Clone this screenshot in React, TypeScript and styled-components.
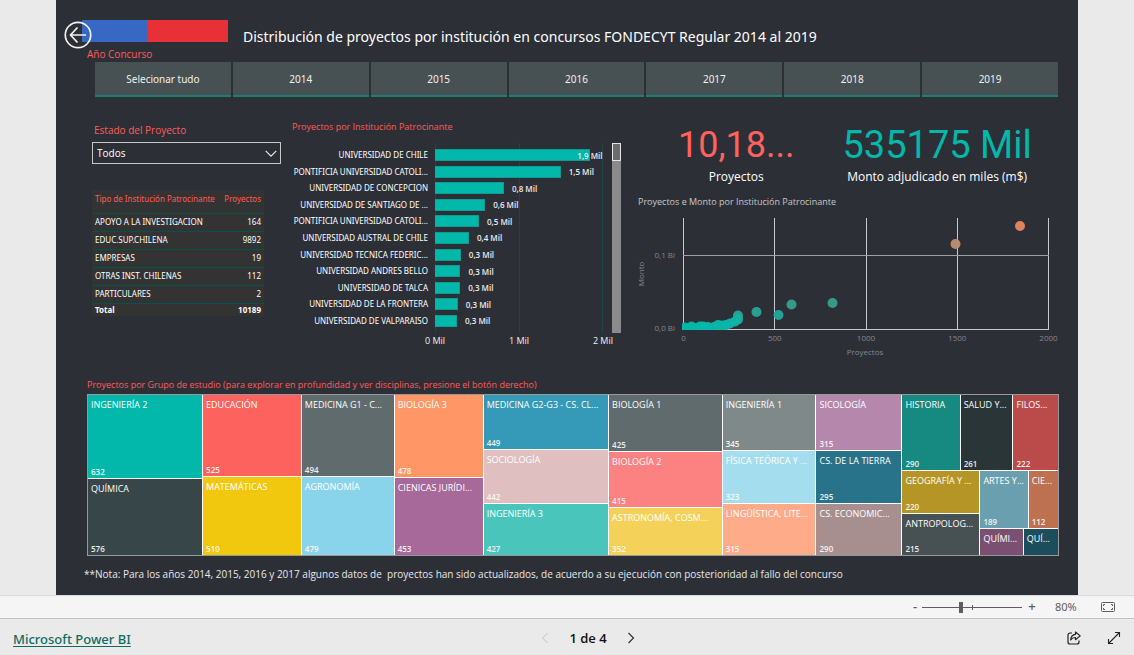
import React, { useState } from "react";
import styled, { createGlobalStyle } from "styled-components";

const GlobalStyle = createGlobalStyle`
  * { box-sizing: border-box; }
  body {
    margin: 0;
    font-family: "Open Sans", "Noto Sans", sans-serif;
    background: #eaeaea;
  }
  button, select, input { font-family: inherit; }
`;

const Page = styled.div`
  display: flex;
  flex-direction: column;
  min-height: 100vh;
`;

const Stage = styled.main`
  flex: 1;
  display: flex;
  padding: 0 56px;
  background: #eaeaea;
`;

const Report = styled.article`
  flex: 1;
  min-width: 0;
  padding: 20px 19px 0 26px;
  background: #2d2f37;
  color: #fff;
`;

const Header = styled.header`
  position: relative;
  display: flex;
  align-items: flex-start;
  height: 27px;
`;

const Flag = styled.div`
  width: 146px;
  height: 22px;
  flex: none;
  background: linear-gradient(to right, #3668c4 0 65px, #e83137 65px);
`;

const BackButton = styled.button`
  position: absolute;
  left: -18px;
  top: 1px;
  width: 28px;
  height: 28px;
  padding: 0;
  border: 0;
  background: none;
  svg { display: block; }
`;

const Title = styled.h1`
  margin: 5px 0 0 15px;
  font-family: "Noto Sans", sans-serif;
  font-size: 14px;
  line-height: 24px;
  font-weight: 400;
  white-space: nowrap;
`;

const Caption = styled.h2<{ $size?: number; $tone?: string }>`
  margin: 0;
  font-size: ${(p) => p.$size ?? 9}px;
  line-height: 14px;
  font-weight: 400;
  color: ${(p) => p.$tone ?? "#fd5c58"};
  white-space: nowrap;
`;

const YearSlicer = styled.section`
  padding-left: 5px;
`;

const YearRow = styled.div`
  display: flex;
  gap: 2px;
  margin: 0 1px 0 8px;
`;

const YearButton = styled.button`
  flex: 1 1 0;
  height: 35px;
  margin-top: 1px;
  padding: 0;
  border: 0;
  border-bottom: 2px solid #1c7d75;
  background: #475052;
  color: #f0f0f0;
  font-family: "Noto Sans", sans-serif;
  font-size: 10px;
`;

const Middle = styled.div`
  display: grid;
  grid-template-columns: 189fr 329fr 426fr;
  column-gap: 11px;
  margin: 21px 1px 0 10px;
  height: 260px;
`;

const Filters = styled.div`
  padding-top: 5px;
`;

const SelectLabel = styled.label`
  display: block;
  margin-left: 2px;
  font-size: 10px;
  line-height: 14px;
  color: #fd5c58;
`;

const SelectBox = styled.div`
  position: relative;
  margin-top: 5px;
  svg {
    position: absolute;
    right: 4px;
    top: 8px;
    pointer-events: none;
  }
`;

const Select = styled.select`
  display: block;
  appearance: none;
  width: 100%;
  height: 22px;
  padding: 0 4px;
  border: 1px solid #c8c8c8;
  border-radius: 0;
  background: #2d2f37;
  color: #fff;
  font-size: 10px;
`;

const Table = styled.table`
  width: 172px;
  height: 126px;
  margin-top: 26px;
  border-collapse: collapse;
  background: #333333;
  font-family: "Noto Sans", sans-serif;
  font-size: 8px;
  line-height: 12px;
  white-space: nowrap;
  th, td {
    padding: 0 3px;
    text-align: left;
    border-bottom: 1px solid #05524c;
  }
  th:last-child, td:last-child { text-align: right; }
  thead th {
    height: 23px;
    padding-bottom: 4px;
    font-weight: 400;
    color: #fd5c58;
  }
  tfoot th, tfoot td { font-weight: 700; border-bottom: 0; }
`;

const BarVisual = styled.section`
  padding: 2px 0 0 0;
`;

const BarBody = styled.div`
  display: flex;
  margin-top: 9px;
  height: 190px;
`;

const Plot = styled.div`
  flex: 1;
  min-width: 0;
  display: grid;
  grid-template-rows: repeat(11, 1fr);
  padding: 4px 0;
  background: linear-gradient(#1c4547, #1c4547) 143px 0 / 1px 100% no-repeat,
    linear-gradient(#1c4547, #1c4547) calc(143px + (100% - 152px) / 2) 0 / 1px 100% no-repeat,
    linear-gradient(#1c4547, #1c4547) calc(100% - 9px) 0 / 1px 100% no-repeat;
`;

const BarRow = styled.div`
  display: flex;
  align-items: center;
  min-height: 0;
  padding-right: 9px;
`;

const BarName = styled.span`
  flex: none;
  width: 136px;
  margin-right: 7px;
  text-align: right;
  font-family: "Noto Sans", sans-serif;
  font-size: 8px;
  line-height: 12px;
  color: #fff;
  white-space: nowrap;
`;

const BarTrack = styled.div`
  flex: 1;
  display: flex;
  align-items: center;
`;

const Bar = styled.div`
  flex: none;
  height: 12px;
  background: #01b8aa;
  border: 1px solid #0b9c92;
  border-left: 0;
`;

const BarValue = styled.span<{ $inside: boolean }>`
  margin-left: ${(p) => (p.$inside ? -13 : 8)}px;
  padding-top: 1px;
  font-size: 8px;
  line-height: 12px;
  font-weight: 600;
  color: #ececec;
  white-space: nowrap;
`;

const ScrollTrack = styled.div`
  width: 9px;
  background: #8b8b8d;
`;

const ScrollThumb = styled.div`
  height: 18px;
  border: 1px solid #e6e6e6;
  background: #6b6c70;
`;

const Axis = styled.div`
  display: flex;
  justify-content: space-between;
  margin: 1px 8px 0 133px;
  font-size: 9px;
  line-height: 14px;
  color: #f0f0f0;
`;

const RightColumn = styled.div`
  padding-left: 6px;
`;

const Kpis = styled.div`
  display: flex;
  margin-left: 40px;
  height: 77px;
  gap: 48px;
`;

const Kpi = styled.div<{ $tone: string; $size: number }>`
  display: flex;
  flex-direction: column;
  align-items: center;
  white-space: nowrap;
  strong {
    font-family: Roboto, sans-serif;
    font-weight: 400;
    font-size: ${(p) => p.$size}px;
    line-height: 44px;
    margin-top: 5px;
    color: ${(p) => p.$tone};
  }
  span {
    font-size: 12px;
    line-height: 16px;
    margin-top: 2px;
    font-weight: 500;
  }
`;

const Scatter = styled.svg`
  display: block;
  width: 100%;
  height: auto;
  overflow: visible;
  font-size: 8px;
  fill: #85868a;
`;

const TreeSection = styled.section`
  margin: 0 0 0 5px;
`;

const TreeFrame = styled.div`
  display: flex;
  gap: 1px;
  height: 162px;
  margin-top: 2px;
  border: 1px solid #96989c;
  background: #fff;
`;

const Group = styled.div<{ $dir: "row" | "column"; $weight: number }>`
  display: flex;
  flex-direction: ${(p) => p.$dir};
  gap: 1px;
  flex: ${(p) => p.$weight} 1 0;
  min-width: 0;
  min-height: 0;
`;

const Tile = styled.div<{ $weight: number; $color: string }>`
  flex: ${(p) => p.$weight} 1 0;
  min-width: 0;
  min-height: 0;
  display: flex;
  flex-direction: column;
  justify-content: space-between;
  padding: 3px 0 0 3px;
  overflow: hidden;
  background: ${(p) => p.$color};
  white-space: nowrap;
  span { font-size: 9px; line-height: 14px; }
  small { font-size: 8px; line-height: 13px; font-weight: 600; opacity: 0.9; }
`;

const Note = styled.p`
  margin: 10px 0 0 2px;
  font-size: 10px;
  line-height: 16px;
  color: #e8e8e8;
  white-space: pre;
`;

const ZoomBar = styled.div`
  display: flex;
  align-items: center;
  justify-content: flex-end;
  height: 24px;
  padding-right: 19px;
  border-top: 1px solid #dcdcdc;
  border-bottom: 1px solid #c4c4c4;
  background: #f5f5f5;
  color: #605e5c;
`;

const ZoomStep = styled.button`
  width: 10px;
  padding: 0 0 2px;
  border: 0;
  background: none;
  color: #605e5c;
  font-size: 13px;
  line-height: 18px;
  font-weight: 600;
`;

const ZoomRange = styled.input`
  appearance: none;
  width: 100px;
  height: 12px;
  margin: 0 5px 0 2px;
  background: linear-gradient(#605e5c, #605e5c) 50px 50% / 1px 5px no-repeat,
    linear-gradient(#605e5c, #605e5c) 0 50% / 100% 1px no-repeat;
  &::-webkit-slider-thumb {
    appearance: none;
    width: 4px;
    height: 11px;
    background: #605e5c;
  }
`;

const ZoomLevel = styled.output`
  width: 24px;
  margin: 0 22px 0 18px;
  padding-bottom: 2px;
  font-family: "Noto Sans", sans-serif;
  font-size: 11px;
`;

const IconButton = styled.button`
  display: flex;
  padding: 0;
  border: 0;
  background: none;
`;

const Footer = styled.footer`
  display: grid;
  grid-template-columns: 1fr auto 1fr;
  align-items: center;
  height: 36px;
  padding: 2px 13px 0;
  background: #eaeaea;
`;

const BrandLink = styled.a`
  color: #0f6a61;
  font-family: "Noto Sans", sans-serif;
  font-size: 13px;
  line-height: 20px;
  font-weight: 500;
  text-underline-offset: 2px;
`;

const Pager = styled.nav`
  display: flex;
  align-items: center;
  gap: 20px;
  padding-left: 42px;
  font-size: 13px;
  line-height: 18px;
  font-weight: 600;
  color: #111;
`;

const Actions = styled.div`
  display: flex;
  justify-content: flex-end;
  align-items: center;
  gap: 26px;
`;

const years = ["Selecionar tudo", "2014", "2015", "2016", "2017", "2018", "2019"];

const institutionTypes: [string, number][] = [
  ["APOYO A LA INVESTIGACION", 164],
  ["EDUC.SUP.CHILENA", 9892],
  ["EMPRESAS", 19],
  ["OTRAS INST. CHILENAS", 112],
  ["PARTICULARES", 2],
];

const institutions: [string, number, string][] = [
  ["UNIVERSIDAD DE CHILE", 1849, "1,9 Mil"],
  ["PONTIFICIA UNIVERSIDAD CATOLI...", 1496, "1,5 Mil"],
  ["UNIVERSIDAD DE CONCEPCION", 820, "0,8 Mil"],
  ["UNIVERSIDAD DE SANTIAGO DE ...", 597, "0,6 Mil"],
  ["PONTIFICIA UNIVERSIDAD CATOLI...", 524, "0,5 Mil"],
  ["UNIVERSIDAD AUSTRAL DE CHILE", 404, "0,4 Mil"],
  ["UNIVERSIDAD TECNICA FEDERIC...", 308, "0,3 Mil"],
  ["UNIVERSIDAD ANDRES BELLO", 303, "0,3 Mil"],
  ["UNIVERSIDAD DE TALCA", 300, "0,3 Mil"],
  ["UNIVERSIDAD DE LA FRONTERA", 272, "0,3 Mil"],
  ["UNIVERSIDAD DE VALPARAISO", 262, "0,3 Mil"],
];

type Point = [number, number, string];
const points: Point[] = [
  [382, 17, "#e8875f"], [317.5, 35, "#c08f6c"], [194.5, 94, "#37a08d"],
  [153.5, 95.5, "#35a08f"], [118.5, 103, "#2aa596"], [140.5, 106, "#21a99b"],
  [100, 106.5, "#27a898"], [100, 110.5, "#14b2a4"], [97, 112.5, "#12b3a5"],
  [92, 114.5, "#0fb4a6"], [88, 116, "#0cb5a7"], [84, 116.5, "#0ab6a8"],
  [80, 116, "#08b6a9"], [76, 118, "#06b7a9"], [70, 118, "#04b7aa"],
  [68, 119, "#04b7aa"], [65, 117.5, "#03b8aa"], [62, 117.5, "#03b8aa"],
  [57, 119, "#03b8aa"], [53, 119, "#02b8aa"], [53.5, 117.5, "#02b8aa"],
  [49, 120, "#01b8aa"], [47, 118.5, "#01b8aa"], [44, 120, "#01b8aa"],
];

type Node = { label?: string; value?: number; shown?: boolean; color?: string; dir?: "row" | "column"; kids?: Node[] };
const t = (label: string, value: number, color: string, shown = true): Node => ({ label, value, color, shown });
const g = (dir: "row" | "column", ...kids: Node[]): Node => ({ dir, kids });

const tree: Node[] = [
  g("column", t("INGENIERÍA 2", 632, "#01b8aa"), t("QUÍMICA", 576, "#374649")),
  g("column", t("EDUCACIÓN", 525, "#fd625e"), t("MATEMÁTICAS", 510, "#f2c80f")),
  g("column", t("MEDICINA G1 - C...", 494, "#5f6b6d"), t("AGRONOMÍA", 479, "#8ad4eb")),
  g("column", t("BIOLOGÍA 3", 478, "#fe9666"), t("CIENICAS JURÍDI...", 453, "#a66999")),
  g("column", t("MEDICINA G2-G3 - CS. CL...", 449, "#3599b8"), t("SOCIOLOGÍA", 442, "#dfbfbf"), t("INGENIERÍA 3", 427, "#4ac5bb")),
  g("column", t("BIOLOGÍA 1", 425, "#5f6b6d"), t("BIOLOGÍA 2", 415, "#fb8281"), t("ASTRONOMÍA, COSM...", 352, "#f4d25a")),
  g("column", t("INGENIERÍA 1", 345, "#7f898a"), t("FÍSICA TEÓRICA Y ...", 323, "#a4ddee"), t("LINGÜÍSTICA, LITE...", 315, "#fdab89")),
  g("column", t("SICOLOGÍA", 315, "#b687ac"), t("CS. DE LA TIERRA", 295, "#28738a"), t("CS. ECONOMIC...", 290, "#a78f8f")),
  g(
    "column",
    g("row", t("HISTORIA", 290, "#168980"), t("SALUD Y...", 261, "#293537"), t("FILOS...", 222, "#bb4a4a")),
    g(
      "row",
      g("column", t("GEOGRAFÍA Y ...", 220, "#b59525"), t("ANTROPOLOG...", 215, "#475052")),
      g(
        "column",
        g("row", t("ARTES Y...", 189, "#6a9fb0"), t("CIE...", 112, "#bd7150")),
        g("row", t("QUÍMI...", 77, "#7b4f71", false), t("QUÍ...", 61, "#1b4d5c", false)),
      ),
    ),
  ),
];

const weigh = (n: Node): number => (n.kids ? n.kids.reduce((s, k) => s + weigh(k), 0) : n.value ?? 0);

function TreeNode({ node }: { node: Node }) {
  if (node.kids) {
    return (
      <Group $dir={node.dir ?? "column"} $weight={weigh(node)}>
        {node.kids.map((k, i) => <TreeNode key={i} node={k} />)}
      </Group>
    );
  }
  return (
    <Tile $weight={node.value ?? 0} $color={node.color ?? "#000"}>
      <span>{node.label}</span>
      {node.shown && <small>{node.value}</small>}
    </Tile>
  );
}

function ScatterChart() {
  return (
    <Scatter viewBox="0 0 420 150" role="img" aria-label="Proyectos e Monto">
      <g stroke="#c9c9cb" strokeWidth="1">
        {[45.5, 136.5, 228.5, 319.5, 410.5].map((x) => <line key={x} x1={x} x2={x} y1="9" y2="120" />)}
        <line x1="45" x2="411" y1="46.5" y2="46.5" stroke="#a0a1a4" />
        <line x1="45" x2="411" y1="120.5" y2="120.5" />
      </g>
      <clipPath id="plot"><rect x="44" y="0" width="374" height="121" /></clipPath>
      <g clipPath="url(#plot)">
        {points.map(([x, y, c], i) => <circle key={i} cx={x} cy={y} r="5" fill={c} fillOpacity="0.95" />)}
      </g>
      <text x="37" y="49" textAnchor="end">0,1 Bi</text>
      <text x="37" y="122" textAnchor="end">0,0 Bi</text>
      {[0, 500, 1000, 1500, 2000].map((v, i) => (
        <text key={v} x={45.5 + i * 91.25} y="132" textAnchor="middle">{v}</text>
      ))}
      <text x="227" y="146" textAnchor="middle">Proyectos</text>
      <text transform="translate(6 65) rotate(-90)" textAnchor="middle">Monto</text>
    </Scatter>
  );
}

export default function App() {
  const [zoom, setZoom] = useState(39);
  return (
    <Page>
      <GlobalStyle />
      <Stage>
        <Report>
          <Header>
            <Flag />
            <BackButton aria-label="Volver">
              <svg width="28" height="28" viewBox="0 0 28 28" fill="none" stroke="#f2f2f2" strokeWidth="1.7">
                <circle cx="14" cy="14" r="12.7" />
                <path d="M22 14H7M13.5 6.5L6.5 14l7 7.5" />
              </svg>
            </BackButton>
            <Title>Distribución de proyectos por institución en concursos FONDECYT Regular 2014 al 2019</Title>
          </Header>
          <YearSlicer>
            <Caption $size={10}>Año Concurso</Caption>
            <YearRow>
              {years.map((y) => <YearButton key={y}>{y}</YearButton>)}
            </YearRow>
          </YearSlicer>

          <Middle>
            <Filters>
              <SelectLabel htmlFor="estado">Estado del Proyecto</SelectLabel>
              <SelectBox>
                <Select id="estado"><option>Todos</option></Select>
                <svg width="12" height="8" viewBox="0 0 12 8" fill="none" stroke="#e8e8e8" strokeWidth="1.2">
                  <path d="M0.7 0.8L6 6.2l5.3-5.4" />
                </svg>
              </SelectBox>
              <Table>
                <thead>
                  <tr><th>Tipo de Institución Patrocinante</th><th>Proyectos</th></tr>
                </thead>
                <tbody>
                  {institutionTypes.map(([name, n]) => <tr key={name}><td>{name}</td><td>{n}</td></tr>)}
                </tbody>
                <tfoot>
                  <tr><th>Total</th><td>10189</td></tr>
                </tfoot>
              </Table>
            </Filters>

            <BarVisual>
              <Caption>Proyectos por Institución Patrocinante</Caption>
              <BarBody>
                <Plot>
                  {institutions.map(([name, n, label], i) => (
                    <BarRow key={i}>
                      <BarName>{name}</BarName>
                      <BarTrack>
                        <Bar style={{ width: `${n / 20}%` }} />
                        <BarValue $inside={n > 1800}>{label}</BarValue>
                      </BarTrack>
                    </BarRow>
                  ))}
                </Plot>
                <ScrollTrack><ScrollThumb /></ScrollTrack>
              </BarBody>
              <Axis><span>0 Mil</span><span>1 Mil</span><span>2 Mil</span></Axis>
            </BarVisual>

            <RightColumn>
              <Kpis>
                <Kpi $tone="#fd625e" $size={36}><strong>10,18...</strong><span>Proyectos</span></Kpi>
                <Kpi $tone="#01b8aa" $size={38}><strong>535175 Mil</strong><span>Monto adjudicado en miles (m$)</span></Kpi>
              </Kpis>
              <Caption $tone="#c8c8c8">Proyectos e Monto por Institución Patrocinante</Caption>
              <ScatterChart />
            </RightColumn>
          </Middle>

          <TreeSection>
            <Caption>Proyectos por Grupo de estudio (para explorar en profundidad y ver disciplinas, presione el botón derecho)</Caption>
            <TreeFrame>
              {tree.map((n, i) => <TreeNode key={i} node={n} />)}
            </TreeFrame>
          </TreeSection>
          <Note>**Nota: Para los años 2014, 2015, 2016 y 2017 algunos datos de  proyectos han sido actualizados, de acuerdo a su ejecución con posterioridad al fallo del concurso</Note>
        </Report>
      </Stage>

      <ZoomBar>
        <ZoomStep aria-label="Alejar">-</ZoomStep>
        <ZoomRange type="range" aria-label="Zoom" value={zoom} onChange={(e) => setZoom(Number(e.target.value))} />
        <ZoomStep aria-label="Acercar">+</ZoomStep>
        <ZoomLevel>80%</ZoomLevel>
        <IconButton aria-label="Ajustar a la página">
          <svg width="14" height="10" viewBox="0 0 14 10" fill="none" stroke="#605e5c">
            <rect x="0.5" y="0.5" width="13" height="9" rx="1" />
            <path d="M2.5 4V2.5H4M10 2.5h1.5V4M11.5 6v1.5H10M4 7.5H2.5V6" />
          </svg>
        </IconButton>
      </ZoomBar>

      <Footer>
        <div><BrandLink href="#">Microsoft Power BI</BrandLink></div>
        <Pager>
          <IconButton aria-label="Página anterior">
            <svg width="8" height="12" viewBox="0 0 8 12" fill="none" stroke="#c2c2c2"><path d="M6.5 1L1.5 6l5 5" /></svg>
          </IconButton>
          <span>1 de 4</span>
          <IconButton aria-label="Página siguiente">
            <svg width="8" height="12" viewBox="0 0 8 12" fill="none" stroke="#333" strokeWidth="1.2"><path d="M1.5 1l5 5-5 5" /></svg>
          </IconButton>
        </Pager>
        <Actions>
          <IconButton aria-label="Compartir">
            <svg width="14" height="14" viewBox="0 0 14 14" fill="none" stroke="#222" strokeWidth="1.2" strokeLinejoin="round">
              <path d="M5 2H3a2 2 0 0 0-2 2v7a2 2 0 0 0 2 2h7a2 2 0 0 0 2-2V9.5" />
              <path d="M8.5 1l4.7 3.9-4.7 3.8V6.5C6 6.4 4.700 7.300 3.700 9 3.900 5.600 5.500 3.500 8.500 3.300z" />
            </svg>
          </IconButton>
          <IconButton aria-label="Pantalla completa">
            <svg width="14" height="14" viewBox="0 0 14 14" fill="none" stroke="#222" strokeWidth="1.1">
              <path d="M1.5 12.5l11-11M8 1.5h4.5V6M1.5 8v4.5H6" />
            </svg>
          </IconButton>
        </Actions>
      </Footer>
    </Page>
  );
}
